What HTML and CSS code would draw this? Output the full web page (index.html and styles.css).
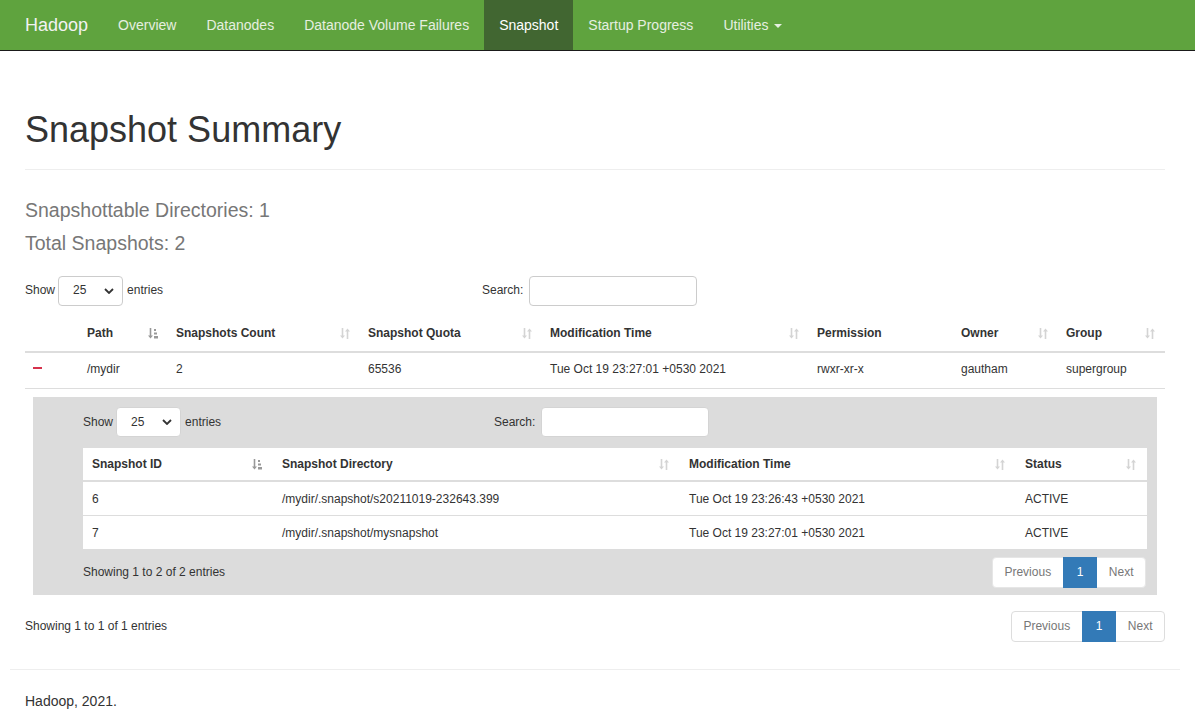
FILE: index.html
```html
<!DOCTYPE html>
<html>
<head>
<meta charset="utf-8">
<title>Hadoop</title>
<link rel="stylesheet" href="styles.css">
</head>
<body>
<header class="navbar">
  <a class="brand">Hadoop</a>
  <nav class="nav">
    <a class="nav-item">Overview</a>
    <a class="nav-item">Datanodes</a>
    <a class="nav-item">Datanode Volume Failures</a>
    <a class="nav-item active">Snapshot</a>
    <a class="nav-item">Startup Progress</a>
    <a class="nav-item">Utilities <span class="caret"></span></a>
  </nav>
</header>

<main class="container">
  <div class="page-header"><h1>Snapshot Summary</h1></div>
  <div class="summary">
    <div class="summary-line">Snapshottable Directories: 1</div>
    <div class="summary-line">Total Snapshots: 2</div>
  </div>

  <div class="controls controls-main">
    <div class="length">Show
      <span class="select"><span>25</span><svg class="chev" viewBox="0 0 10 6" width="10" height="6"><path d="M1 1 L5 5 L9 1" fill="none" stroke="#333" stroke-width="1.8"/></svg></span>
      entries</div>
    <div class="filter">Search: <span class="input"></span></div>
  </div>

  <table class="dt main-table">
    <thead>
      <tr>
        <th class="c-ctl"></th>
        <th class="c-path sort">Path<svg class="si si-on" viewBox="0 0 10 11" width="10" height="11"><path d="M2.5 0 V9" stroke="currentColor" stroke-width="1.6"/><path d="M0 7.5 L2.5 10.5 L5 7.5 Z" fill="currentColor"/><rect x="6" y="1" width="2" height="2" fill="currentColor"/><rect x="6" y="4.5" width="3" height="2" fill="currentColor"/><rect x="6" y="8" width="4" height="2.5" fill="currentColor"/></svg></th>
        <th class="c-count sort">Snapshots Count<svg class="si" viewBox="0 0 10 11" width="10" height="11"><path d="M2.5 0 V9" stroke="currentColor" stroke-width="1.6"/><path d="M0 7.5 L2.5 10.5 L5 7.5 Z" fill="currentColor"/><path d="M7.5 2 V11" stroke="currentColor" stroke-width="1.6"/><path d="M5 3.5 L7.5 0.5 L10 3.5 Z" fill="currentColor"/></svg></th>
        <th class="c-quota sort">Snapshot Quota<svg class="si" viewBox="0 0 10 11" width="10" height="11"><path d="M2.5 0 V9" stroke="currentColor" stroke-width="1.6"/><path d="M0 7.5 L2.5 10.5 L5 7.5 Z" fill="currentColor"/><path d="M7.5 2 V11" stroke="currentColor" stroke-width="1.6"/><path d="M5 3.5 L7.5 0.5 L10 3.5 Z" fill="currentColor"/></svg></th>
        <th class="c-mod sort">Modification Time<svg class="si" viewBox="0 0 10 11" width="10" height="11"><path d="M2.5 0 V9" stroke="currentColor" stroke-width="1.6"/><path d="M0 7.5 L2.5 10.5 L5 7.5 Z" fill="currentColor"/><path d="M7.5 2 V11" stroke="currentColor" stroke-width="1.6"/><path d="M5 3.5 L7.5 0.5 L10 3.5 Z" fill="currentColor"/></svg></th>
        <th class="c-perm">Permission</th>
        <th class="c-owner sort">Owner<svg class="si" viewBox="0 0 10 11" width="10" height="11"><path d="M2.5 0 V9" stroke="currentColor" stroke-width="1.6"/><path d="M0 7.5 L2.5 10.5 L5 7.5 Z" fill="currentColor"/><path d="M7.5 2 V11" stroke="currentColor" stroke-width="1.6"/><path d="M5 3.5 L7.5 0.5 L10 3.5 Z" fill="currentColor"/></svg></th>
        <th class="c-group sort">Group<svg class="si" viewBox="0 0 10 11" width="10" height="11"><path d="M2.5 0 V9" stroke="currentColor" stroke-width="1.6"/><path d="M0 7.5 L2.5 10.5 L5 7.5 Z" fill="currentColor"/><path d="M7.5 2 V11" stroke="currentColor" stroke-width="1.6"/><path d="M5 3.5 L7.5 0.5 L10 3.5 Z" fill="currentColor"/></svg></th>
      </tr>
    </thead>
    <tbody>
      <tr>
        <td class="c-ctl"><span class="minus"></span></td>
        <td>/mydir</td>
        <td>2</td>
        <td>65536</td>
        <td>Tue Oct 19 23:27:01 +0530 2021</td>
        <td>rwxr-xr-x</td>
        <td>gautham</td>
        <td>supergroup</td>
      </tr>
      <tr class="child-row">
        <td colspan="8">
          <div class="child">
            <div class="controls controls-child">
              <div class="length">Show
                <span class="select select-white"><span>25</span><svg class="chev" viewBox="0 0 10 6" width="10" height="6"><path d="M1 1 L5 5 L9 1" fill="none" stroke="#333" stroke-width="1.8"/></svg></span>
                entries</div>
              <div class="filter">Search: <span class="input input-white"></span></div>
            </div>
            <table class="dt inner-table">
              <thead>
                <tr>
                  <th class="i-id sort">Snapshot ID<svg class="si si-on" viewBox="0 0 10 11" width="10" height="11"><path d="M2.5 0 V9" stroke="currentColor" stroke-width="1.6"/><path d="M0 7.5 L2.5 10.5 L5 7.5 Z" fill="currentColor"/><rect x="6" y="1" width="2" height="2" fill="currentColor"/><rect x="6" y="4.5" width="3" height="2" fill="currentColor"/><rect x="6" y="8" width="4" height="2.5" fill="currentColor"/></svg></th>
                  <th class="i-dir sort">Snapshot Directory<svg class="si" viewBox="0 0 10 11" width="10" height="11"><path d="M2.5 0 V9" stroke="currentColor" stroke-width="1.6"/><path d="M0 7.5 L2.5 10.5 L5 7.5 Z" fill="currentColor"/><path d="M7.5 2 V11" stroke="currentColor" stroke-width="1.6"/><path d="M5 3.5 L7.5 0.5 L10 3.5 Z" fill="currentColor"/></svg></th>
                  <th class="i-mod sort">Modification Time<svg class="si" viewBox="0 0 10 11" width="10" height="11"><path d="M2.5 0 V9" stroke="currentColor" stroke-width="1.6"/><path d="M0 7.5 L2.5 10.5 L5 7.5 Z" fill="currentColor"/><path d="M7.5 2 V11" stroke="currentColor" stroke-width="1.6"/><path d="M5 3.5 L7.5 0.5 L10 3.5 Z" fill="currentColor"/></svg></th>
                  <th class="i-status sort">Status<svg class="si" viewBox="0 0 10 11" width="10" height="11"><path d="M2.5 0 V9" stroke="currentColor" stroke-width="1.6"/><path d="M0 7.5 L2.5 10.5 L5 7.5 Z" fill="currentColor"/><path d="M7.5 2 V11" stroke="currentColor" stroke-width="1.6"/><path d="M5 3.5 L7.5 0.5 L10 3.5 Z" fill="currentColor"/></svg></th>
                </tr>
              </thead>
              <tbody>
                <tr>
                  <td>6</td>
                  <td>/mydir/.snapshot/s20211019-232643.399</td>
                  <td>Tue Oct 19 23:26:43 +0530 2021</td>
                  <td>ACTIVE</td>
                </tr>
                <tr>
                  <td>7</td>
                  <td>/mydir/.snapshot/mysnapshot</td>
                  <td>Tue Oct 19 23:27:01 +0530 2021</td>
                  <td>ACTIVE</td>
                </tr>
              </tbody>
            </table>
            <div class="table-footer footer-child">
              <div class="info">Showing 1 to 2 of 2 entries</div>
              <div class="pager pager-white">
                <span class="pg pg-disabled">Previous</span><span class="pg pg-active">1</span><span class="pg pg-disabled">Next</span>
              </div>
            </div>
          </div>
        </td>
      </tr>
    </tbody>
  </table>

  <div class="table-footer footer-main">
    <div class="info">Showing 1 to 1 of 1 entries</div>
    <div class="pager">
      <span class="pg pg-disabled">Previous</span><span class="pg pg-active">1</span><span class="pg pg-disabled">Next</span>
    </div>
  </div>
</main>

<footer class="site-footer">
  <div class="footer-rule"></div>
  <p class="footer-text">Hadoop, 2021.</p>
</footer>
</body>
</html>
```

FILE: styles.css
```css
* { box-sizing: border-box; }
html, body { margin: 0; padding: 0; }
body {
  font-family: "Liberation Sans", Arial, Helvetica, sans-serif;
  font-size: 14px;
  line-height: 1.42857;
  color: #333;
  background: #fff;
}

/* Navbar */
.navbar {
  display: flex;
  align-items: stretch;
  height: 51px;
  background: #5fa33e;
  border-bottom: 1px solid #1a1a1a;
  padding-left: 10px;
}
.brand {
  display: flex;
  align-items: center;
  padding: 2px 15px 0;
  font-size: 18px;
  color: #f2f2f2;
  height: 50px;
}
.nav { display: flex; }
.nav-item {
  display: flex;
  align-items: center;
  padding: 2px 15px 0;
  height: 50px;
  color: #e6efe0;
  font-size: 14px;
}
.nav-item.active {
  background: #416631;
  color: #fff;
}
.caret {
  display: inline-block;
  width: 0; height: 0;
  margin-left: 5px;
  border-top: 4px solid #e6efe0;
  border-left: 4px solid transparent;
  border-right: 4px solid transparent;
  vertical-align: middle;
}

/* Container */
.container {
  padding: 0 30px 0 25px;
}
.page-header {
  margin-top: 49px;
  border-bottom: 1px solid #eee;
  padding-bottom: 19px;
}
.page-header h1 {
  margin: 0;
  font-size: 36px;
  font-weight: 500;
  line-height: 1.1;
  padding-top: 10px;
}
.summary { padding-top: 29px; }
.summary-line {
  font-size: 19.5px;
  color: #777;
  line-height: 22px;
  height: 33px;
}

/* Controls */
.controls {
  display: flex;
  align-items: center;
  font-size: 12px;
  height: 30px;
}
.controls-main { margin-top: 11px; }
.controls-main .length { width: 457px; }
.controls-child .length { width: 411px; }
.length, .filter { display: flex; align-items: center; }
.select {
  display: inline-flex;
  align-items: center;
  justify-content: space-between;
  width: 65px;
  height: 30px;
  margin: 0 4px 0 3px;
  padding: 0 8px 0 14px;
  border: 1px solid #ccc;
  border-radius: 4px;
  background: #fff;
  font-size: 12px;
  color: #333;
}
.chev { display: block; }
.input {
  display: inline-block;
  width: 168px;
  height: 30px;
  margin-left: 6px;
  border: 1px solid #ccc;
  border-radius: 4px;
  background: #fff;
}
.select-white, .input-white { border-color: #d4d4d4; }

/* Tables */
.dt {
  width: 100%;
  border-collapse: collapse;
  font-size: 12px;
  table-layout: fixed;
}
.main-table { margin-top: 9px; }
.dt th {
  position: relative;
  text-align: left;
  font-weight: bold;
  padding: 8px;
  line-height: 20px;
  border-bottom: 2px solid #ddd;
  white-space: nowrap;
}
.dt td {
  padding: 8px;
  line-height: 20px;
  border-bottom: 1px solid #ddd;
  vertical-align: top;
  white-space: nowrap;
}
.main-table > tbody > tr:first-child > td { padding: 6px 8px 9px; }
.si {
  position: absolute;
  right: 10px;
  top: 13px;
  color: #d4d4d4;
}
.si-on { color: #999; }

.c-ctl { width: 54px; }
.c-path { width: 89px; }
.c-count { width: 192px; }
.c-quota { width: 182px; }
.c-mod { width: 267px; }
.c-perm { width: 144px; }
.c-owner { width: 105px; }
.c-group { width: 107px; }

.minus {
  display: inline-block;
  width: 9px;
  height: 2px;
  background: #d6324c;
  vertical-align: middle;
  margin-bottom: 2px;
}

.main-table > tbody > .child-row > td { padding: 8px; border-bottom: none; }
.child {
  background: #dcdcdc;
  padding: 10px 10px 7px 50px;
}
.inner-table {
  margin-top: 11px;
  background: #fff;
}
.inner-table th { padding: 6px 9px; }
.inner-table td { padding: 7px 9px 6px; }
.inner-table tbody tr:last-child td { border-bottom: none; }
.inner-table .si { top: 11px; right: 11px; }
.i-id { width: 190px; }
.i-dir { width: 407px; }
.i-mod { width: 336px; }
.i-status { width: 131px; }

/* Footer of tables */
.table-footer {
  display: flex;
  justify-content: space-between;
  align-items: center;
  font-size: 12px;
}
.footer-child { margin-top: 8px; }
.footer-child .pager { margin-right: 1px; }
.footer-main { margin-top: 8px; }
.pager { display: flex; }
.pg {
  display: block;
  padding: 0 11.5px;
  height: 31px;
  line-height: 29px;
  border: 1px solid #ddd;
  margin-left: -1px;
  background: #fff;
  color: #777;
  font-size: 12px;
}
.pg:first-child { border-radius: 4px 0 0 4px; margin-left: 0; }
.pg:last-child { border-radius: 0 4px 4px 0; }
.pg-active {
  background: #337ab7;
  border-color: #337ab7;
  color: #fff;
  padding: 0 13px;
  position: relative;
}
.pager-white .pg-disabled { border-color: #e6e6e6; }

.site-footer { padding: 0 15px 0 10px; }
.footer-rule {
  margin-top: 27px;
  border-top: 1px solid #eee;
}
.footer-text {
  margin: 22px 0 0 15px;
  font-size: 14px;
}
```
